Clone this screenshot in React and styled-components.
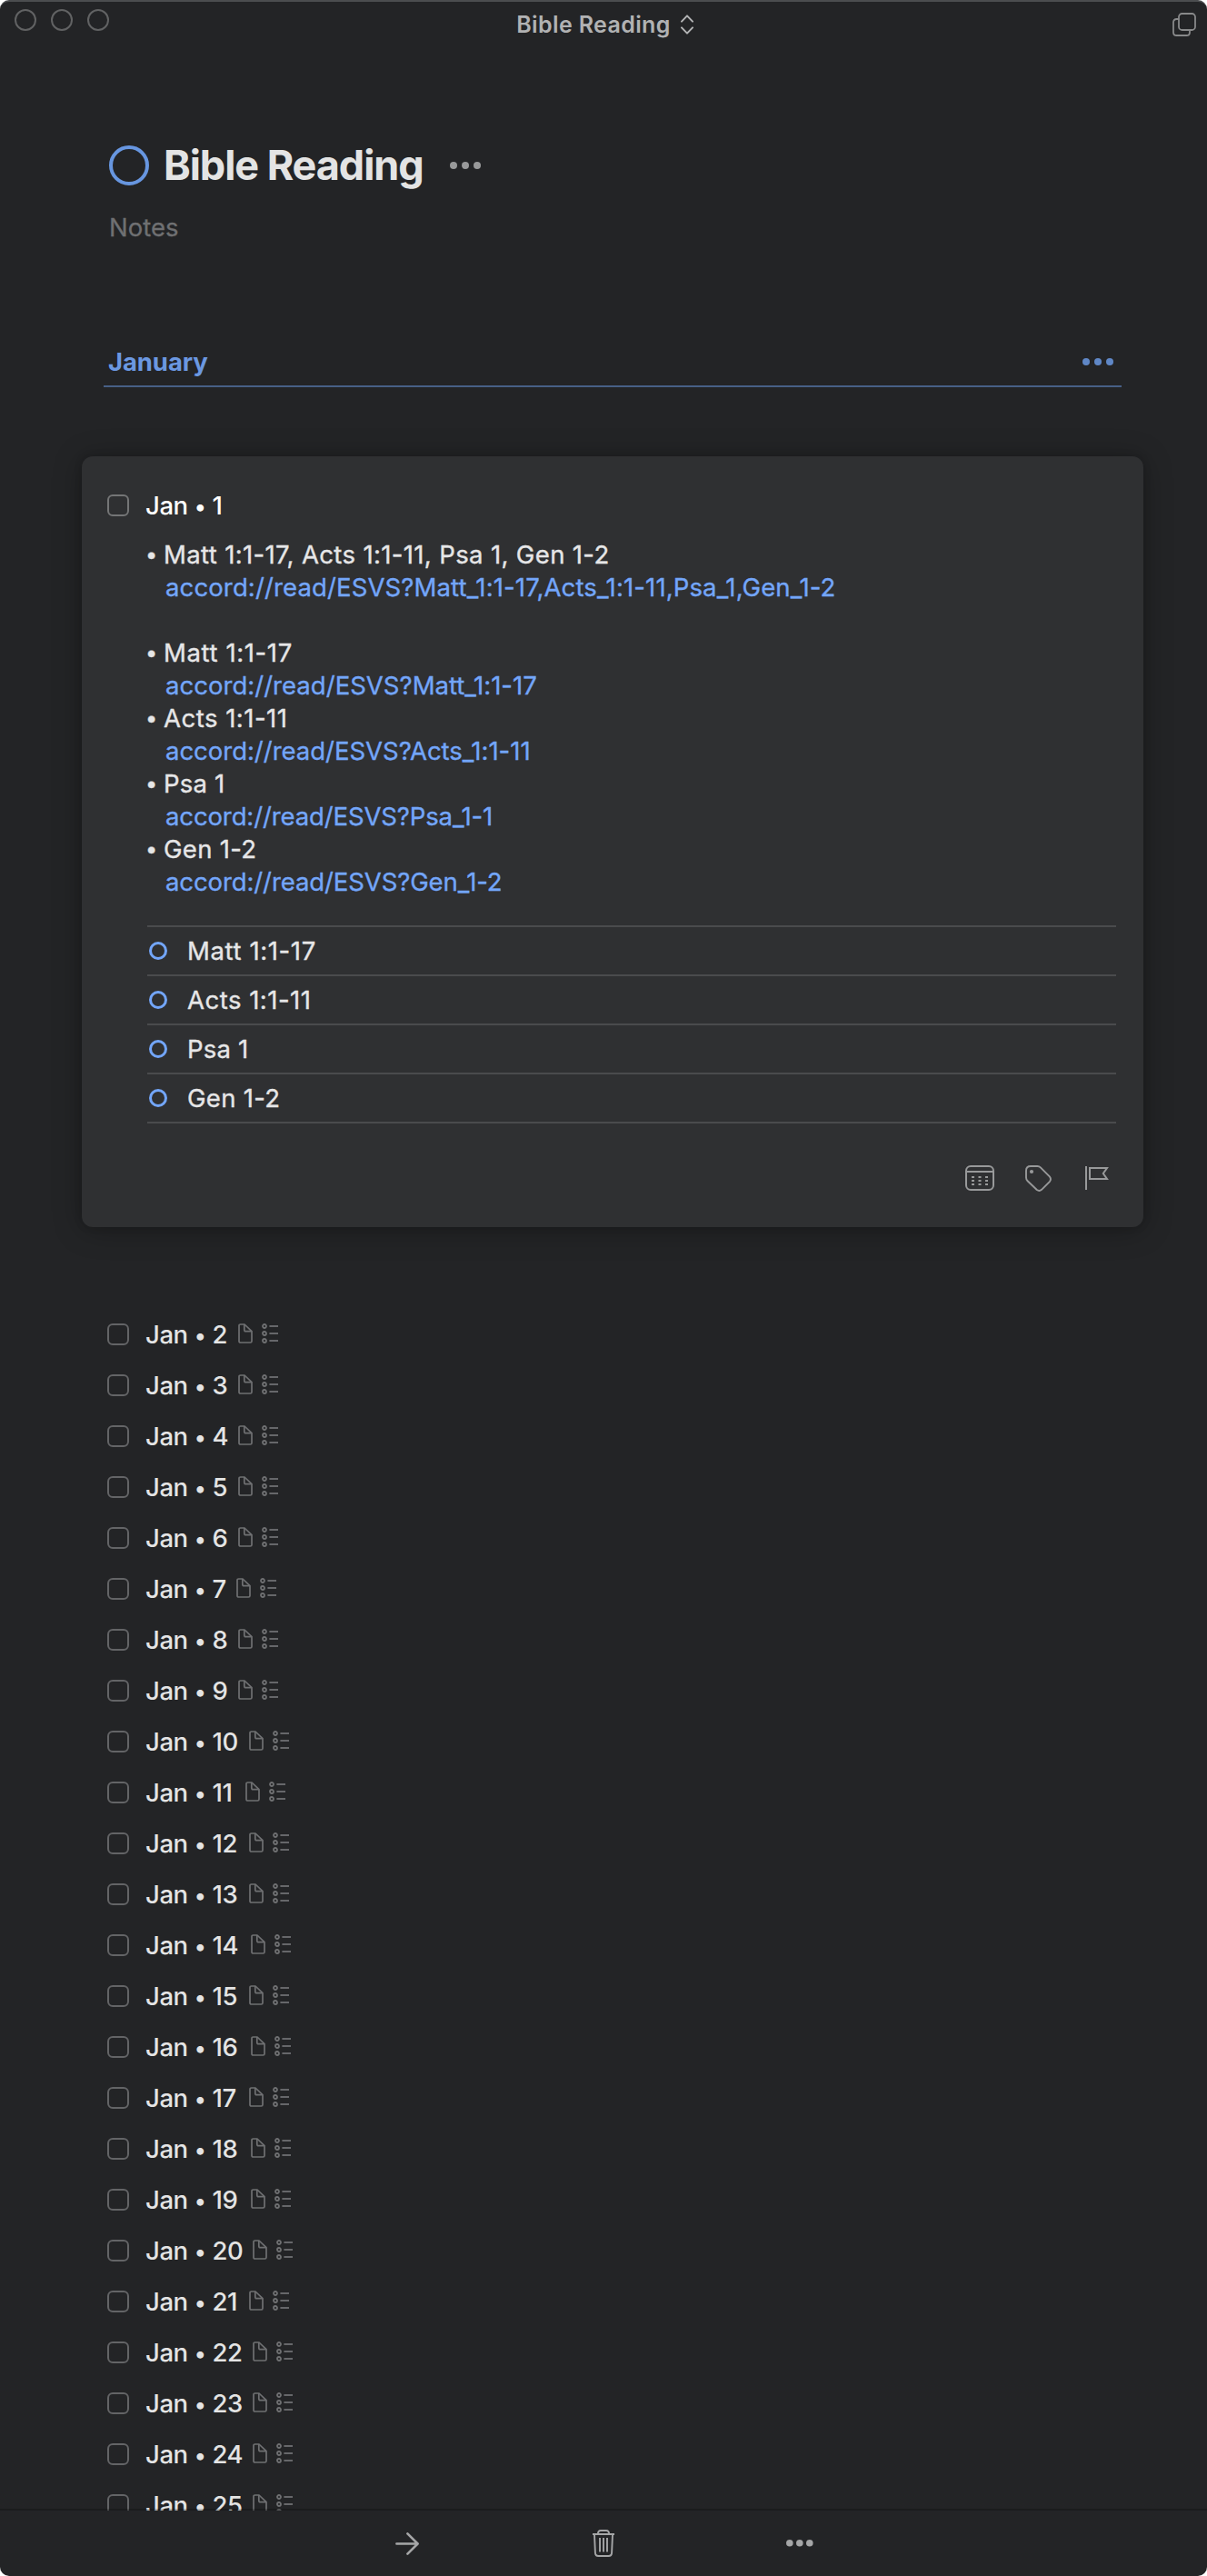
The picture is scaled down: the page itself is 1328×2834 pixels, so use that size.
import React from 'react';
import styled, { createGlobalStyle } from 'styled-components';

const GlobalStyle = createGlobalStyle`
  *, *::before, *::after { box-sizing: border-box; }
  body {
    margin: 0;
    background: #fff;
    font-family: Inter, "Liberation Sans", sans-serif;
  }
`;

const Window = styled.div`
  width: 1328px;
  height: 2834px;
  display: flex;
  flex-direction: column;
  overflow: hidden;
  border-radius: 10px;
  border-top: 2px solid #4b4d4f;
  background: #232426;
  color: #e4e4e4;
`;

const TitleBar = styled.header`
  height: 58px;
  flex: none;
  display: grid;
  grid-template-columns: 1fr auto 1fr;
  align-items: start;
  padding: 8px 12px 0 16px;
`;

const TrafficLights = styled.div`
  display: flex;
  gap: 16px;
`;

const Light = styled.span`
  width: 24px;
  height: 24px;
  border: 2px solid #616263;
  border-radius: 50%;
`;

const WindowTitle = styled.div`
  display: flex;
  align-items: center;
  gap: 11px;
  padding: 2px 1px 0 0;
  color: #b1b2b3;
  font-size: 25px;
  font-weight: 600;
  line-height: 30px;
  letter-spacing: 0.37px;
`;

const TitleActions = styled.div`
  display: flex;
  justify-content: flex-end;
  padding-top: 4px;
`;

const Icon = styled.svg`
  display: block;
  flex: none;
  fill: none;
  stroke: currentColor;
  color: ${(p) => p.$color || 'inherit'};
`;

const Content = styled.main`
  height: 2702px;
  flex: none;
  overflow: hidden;
`;

const ProjectHeader = styled.div`
  display: flex;
  align-items: center;
  height: 56px;
  margin: 94px 0 0 120px;
`;

const ProjectCircle = styled.span`
  width: 44px;
  height: 44px;
  border: 4px solid #6796e0;
  border-radius: 50%;
`;

const ProjectTitle = styled.h1`
  margin: 0 29px 0 16px;
  font-size: 45px;
  font-weight: 700;
  line-height: 56px;
  letter-spacing: -1.06px;
`;

const ProjectNotes = styled.p`
  margin: 22px 0 0 120px;
  color: #6f7072;
  font-size: 27.5px;
  line-height: 36px;
  -webkit-text-stroke: 0.3px currentColor;
`;

const Heading = styled.div`
  display: flex;
  justify-content: space-between;
  align-items: flex-start;
  height: 46px;
  margin: 112px 94px 0 114px;
  padding: 0 9px 0 5px;
  border-bottom: 2px solid #476086;
`;

const HeadingTitle = styled.h2`
  margin: 0;
  color: #6b98e1;
  font-size: 27.5px;
  font-weight: 700;
  line-height: 36px;
  letter-spacing: -0.1px;
`;

const HeadingMenu = styled.div`
  padding-top: 14px;
`;

const Card = styled.section`
  height: 848px;
  margin: 76px 70px 0 90px;
  padding: 36px 30px 0 28px;
  border-radius: 12px;
  background: #2f3032;
  box-shadow: 0 0 8px rgba(0, 0, 0, 0.16), 0 3px 32px rgba(0, 0, 0, 0.28);
`;

const TodoRow = styled.div`
  display: flex;
  align-items: center;
  height: ${(p) => p.$height}px;
`;

const Checkbox = styled.span`
  flex: none;
  width: 24px;
  height: 24px;
  margin-right: 18px;
  border: 2px solid ${(p) => (p.$bright ? '#747576' : '#636466')};
  border-radius: 6px;
`;

const TodoTitle = styled.span`
  flex: none;
  width: ${(p) => (p.$width ? `${p.$width}px` : 'auto')};
  color: ${(p) => (p.$bright ? '#fff' : '#e4e4e4')};
  font-size: 27.5px;
  font-weight: 500;
  line-height: 36px;
  letter-spacing: -0.42px;
  white-space: nowrap;
`;

const Separator = styled.span`
  font-size: 24.5px;
  letter-spacing: -0.2px;
`;

const TodoBody = styled.div`
  padding: 18px 0 0 44px;
`;

const NoteLine = styled.div`
  display: flex;
  height: 36px;
  color: #e6e6e7;
  font-size: 27.5px;
  line-height: 36px;
  letter-spacing: ${(p) => p.$track || 0}px;
  white-space: nowrap;
  -webkit-text-stroke: 0.35px currentColor;
`;

const Bullet = styled.span`
  width: 20px;
  margin-left: -2px;
  font-size: 23.5px;
`;

const NoteLink = styled.a`
  padding-left: 20px;
  color: #73a6fa;
`;

const Checklist = styled.ul`
  margin: 30px 0 0;
  padding: 0;
  list-style: none;
  border-top: 2px solid #4a4b4d;
`;

const ChecklistItem = styled.li`
  display: flex;
  align-items: center;
  gap: 22px;
  height: 54px;
  padding-left: 2px;
  border-bottom: 2px solid #4a4b4d;
  color: #e6e6e7;
  font-size: 27.5px;
  line-height: 36px;
  letter-spacing: ${(p) => p.$track}px;
  -webkit-text-stroke: 0.35px currentColor;
`;

const ItemCircle = styled.span`
  width: 20px;
  height: 20px;
  border: 3px solid #73a6fa;
  border-radius: 50%;
`;

const CardTools = styled.div`
  display: flex;
  justify-content: flex-end;
  align-items: flex-start;
  padding: 46px 8px 0 0;
  color: #98999a;
`;

const Tool = styled.span`
  margin-left: ${(p) => p.$gap || 0}px;
`;

const TodoList = styled.div`
  padding: 90px 0 0 118px;
`;

const Badges = styled.span`
  display: flex;
  gap: 10px;
  margin-top: -2px;
  color: #6f7072;
`;

const BottomBar = styled.footer`
  position: relative;
  flex: none;
  display: flex;
  justify-content: center;
  height: 74px;
  margin-top: -2px;
  border-top: 2px solid rgba(0, 0, 0, 0.22);
  color: #a5a6a7;
`;

const BarButton = styled.span`
  display: flex;
  align-items: center;
  justify-content: center;
  width: 216px;
  height: 72px;
`;

function Dots({ size = 8, step = 13, color }) {
  const width = size + step * 2;
  return (
    <Icon width={width} height={size} viewBox={`0 0 ${width} ${size}`} $color={color}>
      {[0, 1, 2].map((n) => (
        <circle key={n} cx={size / 2 + n * step} cy={size / 2} r={size / 2} fill="currentColor" stroke="none" />
      ))}
    </Icon>
  );
}

const UpDownIcon = () => (
  <Icon width="14" height="22" viewBox="0 0 14 22" strokeWidth="2" strokeLinecap="round" strokeLinejoin="round">
    <path d="M1 7.6 7 1.4l6 6.2M1 14.4l6 6.2 6-6.2" />
  </Icon>
);

const WindowsIcon = () => (
  <Icon width="26" height="26" viewBox="0 0 26 26" strokeWidth="1.8" $color="#88898a">
    <rect x="7" y="1" width="18" height="18" rx="3.6" />
    <path d="M7 7H4.6Q1 7 1 10.6v10.8Q1 25 4.6 25h10.8Q19 25 19 21.4V19" />
  </Icon>
);

const CalendarIcon = () => (
  <Icon width="32" height="28" viewBox="0 0 32 28" strokeWidth="2">
    <rect x="1" y="1" width="30" height="26" rx="5" />
    <path d="M1 7h30" />
    <path d="M7 13h3m4.5 0h3M22 13h3M7 17h3m4.5 0h3M22 17h3M7 21h3m4.5 0h3M22 21h3" />
  </Icon>
);

const TagIcon = () => (
  <Icon width="29" height="29" viewBox="0 0 29 29" strokeWidth="1.9" strokeLinejoin="round">
    <path d="M1 6Q1 1 6 1h7.4Q15.4 1 16.8 2.4L26.8 12.4Q29 15 27 17.8L18 26.8Q15.6 29 12.8 27L2.6 17.2Q1 15.6 1 13.4Z" />
    <circle cx="7" cy="7" r="2.1" fill="currentColor" stroke="none" />
  </Icon>
);

const FlagIcon = () => (
  <Icon width="26" height="27" viewBox="0 0 26 27" strokeWidth="2">
    <path d="M1 1v26M5 3h19l-4.2 6 4.2 6H5Z" />
  </Icon>
);

const NoteIcon = () => (
  <Icon width="16" height="22" viewBox="0 0 16 22" strokeWidth="1.7" strokeLinejoin="round">
    <path d="M2.6 1H7l8 7.6v10.8Q15 21 13.4 21H2.6Q1 21 1 19.4V2.6Q1 1 2.6 1Z" />
    <path d="M6.8 1v6q0 1.7 1.7 1.7H15" />
  </Icon>
);

const ListIcon = () => (
  <Icon width="18" height="22" viewBox="0 0 18 22" strokeWidth="1.8">
    {[3, 11, 19].map((y) => (
      <React.Fragment key={y}>
        <circle cx="3" cy={y} r="2" />
        <path d={`M8.4 ${y}H18`} />
      </React.Fragment>
    ))}
  </Icon>
);

const ArrowIcon = () => (
  <Icon width="26" height="25" viewBox="0 0 26 25" strokeWidth="2.6" strokeLinecap="round" strokeLinejoin="round">
    <path d="M1.4 12.5h23M13.4 1.4l11.2 11.1-11.2 11.1" />
  </Icon>
);

const TrashIcon = () => (
  <Icon width="24" height="30" viewBox="0 0 24 30" strokeWidth="1.9">
    <path d="M0 5h24M5.8 5Q6 1 9 1h6q3 0 3.2 4" />
    <path d="M2 5l.9 20.4Q3.1 29 6.4 29h11.2q3.3 0 3.5-3.6L22 5" />
    <path d="M8 9v15.6M12 9v15.6M16 9v15.6" />
  </Icon>
);

const noteLines = [
  { text: 'Matt 1:1-17, Acts 1:1-11, Psa 1, Gen 1-2', track: 0.36 },
  { link: 'accord://read/ESVS?Matt_1:1-17,Acts_1:1-11,Psa_1,Gen_1-2', track: 0.13 },
  {},
  { text: 'Matt 1:1-17', track: 0.62 },
  { link: 'accord://read/ESVS?Matt_1:1-17', track: 0.03 },
  { text: 'Acts 1:1-11', track: 0.5 },
  { link: 'accord://read/ESVS?Acts_1:1-11', track: -0.02 },
  { text: 'Psa 1', track: 0.2 },
  { link: 'accord://read/ESVS?Psa_1-1', track: -0.12 },
  { text: 'Gen 1-2', track: 0.3 },
  { link: 'accord://read/ESVS?Gen_1-2', track: -0.1 },
];

const checklist = [
  { text: 'Matt 1:1-17', track: 0.62 },
  { text: 'Acts 1:1-11', track: 0.5 },
  { text: 'Psa 1', track: 0.2 },
  { text: 'Gen 1-2', track: 0.3 },
];

const days = [
  [2, 102], [3, 102], [4, 102], [5, 102], [6, 102], [7, 100], [8, 102], [9, 102],
  [10, 114], [11, 110], [12, 114], [13, 114], [14, 116], [15, 114], [16, 116], [17, 114],
  [18, 116], [19, 116], [20, 118], [21, 114], [22, 118], [23, 118], [24, 118], [25, 118],
];

const DayTitle = ({ day, width, bright }) => (
  <TodoTitle $width={width} $bright={bright}>
    Jan <Separator>•</Separator> {day}
  </TodoTitle>
);

export default function App() {
  return (
    <>
      <GlobalStyle />
      <Window>
        <TitleBar>
          <TrafficLights>
            <Light />
            <Light />
            <Light />
          </TrafficLights>
          <WindowTitle>
            Bible Reading
            <UpDownIcon />
          </WindowTitle>
          <TitleActions>
            <WindowsIcon />
          </TitleActions>
        </TitleBar>

        <Content>
          <ProjectHeader>
            <ProjectCircle />
            <ProjectTitle>Bible Reading</ProjectTitle>
            <Dots color="#98999a" />
          </ProjectHeader>
          <ProjectNotes>Notes</ProjectNotes>

          <Heading>
            <HeadingTitle>January</HeadingTitle>
            <HeadingMenu>
              <Dots color="#5f87c6" />
            </HeadingMenu>
          </Heading>

          <Card>
            <TodoRow $height={36}>
              <Checkbox $bright />
              <DayTitle day={1} bright />
            </TodoRow>
            <TodoBody>
              {noteLines.map((line, i) => (
                <NoteLine key={i} $track={line.track}>
                  {line.text && (
                    <>
                      <Bullet>•</Bullet>
                      <span>{line.text}</span>
                    </>
                  )}
                  {line.link && <NoteLink>{line.link}</NoteLink>}
                </NoteLine>
              ))}
              <Checklist>
                {checklist.map((item) => (
                  <ChecklistItem key={item.text} $track={item.track}>
                    <ItemCircle />
                    {item.text}
                  </ChecklistItem>
                ))}
              </Checklist>
              <CardTools>
                <Tool><CalendarIcon /></Tool>
                <Tool $gap={34}><TagIcon /></Tool>
                <Tool $gap={37}><FlagIcon /></Tool>
              </CardTools>
            </TodoBody>
          </Card>

          <TodoList>
            {days.map(([day, width]) => (
              <TodoRow key={day} $height={56}>
                <Checkbox />
                <DayTitle day={day} width={width} />
                <Badges>
                  <NoteIcon />
                  <ListIcon />
                </Badges>
              </TodoRow>
            ))}
          </TodoList>
        </Content>

        <BottomBar>
          <BarButton><ArrowIcon /></BarButton>
          <BarButton><TrashIcon /></BarButton>
          <BarButton><Dots size={7.6} step={11} /></BarButton>
        </BottomBar>
      </Window>
    </>
  );
}
